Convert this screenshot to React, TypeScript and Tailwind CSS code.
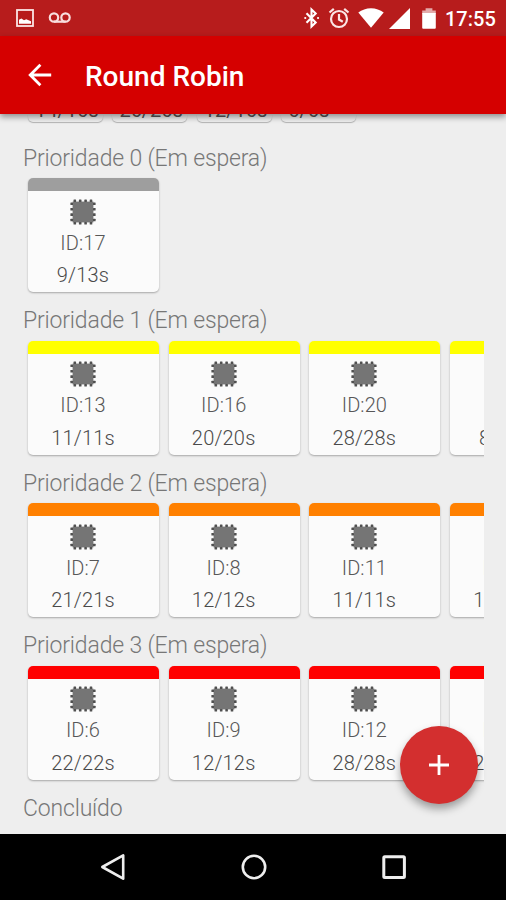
import type { ReactNode } from 'react'

type Process = { id: number; time: string }
type Queue = { title: string; bar: string; items: Process[] }

const RUNNING = ['14/16s', '26/26s', '12/16s', '6/6s']

const QUEUES: Queue[] = [
  { title: 'Prioridade 0 (Em espera)', bar: 'bg-[#9e9e9e]', items: [{ id: 17, time: '9/13s' }] },
  {
    title: 'Prioridade 1 (Em espera)', bar: 'bg-[#ffff00]',
    items: [{ id: 13, time: '11/11s' }, { id: 16, time: '20/20s' }, { id: 20, time: '28/28s' }, { id: 4, time: '8/18s' }],
  },
  {
    title: 'Prioridade 2 (Em espera)', bar: 'bg-[#ff8000]',
    items: [{ id: 7, time: '21/21s' }, { id: 8, time: '12/12s' }, { id: 11, time: '11/11s' }, { id: 14, time: '13/13s' }],
  },
  {
    title: 'Prioridade 3 (Em espera)', bar: 'bg-[#ff0000]',
    items: [{ id: 6, time: '22/22s' }, { id: 9, time: '12/12s' }, { id: 12, time: '28/28s' }, { id: 15, time: '22/22s' }],
  },
]

function ChipIcon() {
  const pins = [4.7, 10.1, 15.5, 20.9]
  return (
    <svg width="26" height="26" viewBox="0 0 26 26" className="shrink-0">
      <rect x="2.6" y="2.6" width="20.8" height="20.8" fill="#757575" />
      {pins.map(p => (
        <g key={p} fill="#505050">
          <rect x={p - 1.2} y="0.4" width="2.6" height="2.6" rx="0.5" />
          <rect x={p - 1.2} y="23" width="2.6" height="2.6" rx="0.5" />
          <rect x="0.4" y={p - 1.2} width="2.6" height="2.6" rx="0.5" />
          <rect x="23" y={p - 1.2} width="2.6" height="2.6" rx="0.5" />
        </g>
      ))}
    </svg>
  )
}

function ProcessCard({ process, bar }: { process: Process; bar: string }) {
  return (
    <div className="w-[131px] h-[114px] shrink-0 rounded-[5px] overflow-hidden bg-[#fbfbfb] shadow-[0_1px_2px_rgba(0,0,0,0.3)]">
      <div className={`h-[13px] ${bar}`} />
      <div className="flex w-[110px] flex-col items-center pt-[7.5px] text-[20px] leading-[32.5px] font-light text-[#4a4a4a]">
        <ChipIcon />
        <span className="mt-[2px] h-[32.5px] tracking-[0.1px] text-[#575757]">ID:{process.id}</span>
        <span className="h-[32.5px] tracking-[0.2px]">{process.time}</span>
      </div>
    </div>
  )
}

function QueueSection({ queue }: { queue: Queue }) {
  return (
    <section className="h-[162.6px] shrink-0">
      <QueueTitle>{queue.title}</QueueTitle>
      <div className="mt-[4px] flex h-[120px] gap-[9.7px] overflow-hidden pl-[5px] pt-[1px]">
        {queue.items.map(p => <ProcessCard key={p.id} process={p} bar={queue.bar} />)}
      </div>
    </section>
  )
}

function QueueTitle({ children }: { children: ReactNode }) {
  return <h2 className="h-[30px] pt-[0.5px] text-[23px] leading-[30px] font-light tracking-[-0.17px] whitespace-nowrap text-[#777]">{children}</h2>
}

function StatusBar() {
  return (
    <div className="flex h-9 shrink-0 items-center bg-[#b71c1c] pl-4 pr-[10px] text-white">
      <svg width="18" height="18" viewBox="0 0 18 18">
        <rect x="1" y="1" width="16" height="16" fill="none" stroke="#fbe6e6" strokeWidth="1.8" />
        <path d="M3 14.8v-4l2.4-1.3 2.6 1.8 2.2-1 4.8 1.9v2.6z" fill="#fff" />
      </svg>
      <svg className="ml-[14px]" width="24" height="14" viewBox="0 0 24 14" fill="none" stroke="#f8dede" strokeWidth="2.2">
        <circle cx="6" cy="6.5" r="4.2" />
        <circle cx="17.5" cy="6.5" r="4.2" />
        <path d="M6 10.7h11.5" />
      </svg>
      <svg className="ml-auto" width="16" height="22" viewBox="0 0 16 22" fill="none" stroke="#fff" strokeWidth="2.1">
        <path d="M2.5 6.2l9.2 9.3-4.2 4V2.5l4.2 4-9.2 9.3" />
        <path d="M1.2 11h.1M14 11h.1" strokeLinecap="round" />
      </svg>
      <svg className="ml-[8px]" width="22" height="22" viewBox="0 0 22 22" fill="none" stroke="#fbe6e6" strokeWidth="2.2">
        <circle cx="11" cy="12" r="8" />
        <path d="M11 7v5.5l3.8 2.2M1.5 5.5l4.3-3.6M20.5 5.5l-4.3-3.6" />
      </svg>
      <svg className="ml-[8px]" width="26" height="20" viewBox="0 0 26 20">
        <path d="M.3 4.5C3.8 1.8 8.2.2 13 .2s9.2 1.6 12.7 4.3L13 19.8z" fill="#fff" />
      </svg>
      <svg className="ml-[5px]" width="21" height="21" viewBox="0 0 21 21">
        <path d="M0 21L21 0v21z" fill="#fff" />
      </svg>
      <svg className="ml-[11px]" width="16" height="21" viewBox="0 0 16 21">
        <path d="M1.2 2.4h3.4V.3h6.8v2.1h3.4v3.4H1.2z" fill="#e3aaaa" />
        <path d="M1.2 5h13.6v14.8q0 1-1 1H2.2q-1 0-1-1z" fill="#fff" />
      </svg>
      <span className="ml-[8px] w-[51px] pt-[2px] text-[20px] leading-[34px] font-medium whitespace-nowrap">17:55</span>
    </div>
  )
}

function Toolbar() {
  return (
    <header className="relative z-10 flex h-[77.5px] shrink-0 items-center bg-[#d50000] pl-[27px] text-white shadow-[0_3px_6px_rgba(0,0,0,0.4)]">
      <svg width="24" height="24" viewBox="0 0 24 24" className="ml-px" fill="none" stroke="#fff" strokeWidth="2.8">
        <path d="M12.4 1.8L2.2 12l10.2 10.2M2.2 12h21" />
      </svg>
      <h1 className="ml-[33px] pt-[4px] text-[28px] leading-8 font-medium whitespace-nowrap">Round Robin</h1>
    </header>
  )
}

function NavBar() {
  return (
    <nav className="flex h-[66.5px] shrink-0 items-center bg-black pl-[99px]">
      <svg width="28" height="28" viewBox="0 0 28 28" fill="none" stroke="#eee" strokeWidth="2.6" strokeLinejoin="round">
        <path d="M3.3 14L24.2 2.3v23.4z" />
      </svg>
      <svg className="ml-[113px]" width="28" height="28" viewBox="0 0 28 28" fill="none" stroke="#eee" strokeWidth="2.6">
        <circle cx="14" cy="14" r="11.2" />
      </svg>
      <svg className="ml-[112px]" width="28" height="28" viewBox="0 0 28 28" fill="none" stroke="#eee" strokeWidth="3">
        <rect x="3.8" y="3.8" width="20.6" height="20.6" rx="1" />
      </svg>
    </nav>
  )
}

export default function App() {
  return (
    <div className="relative flex h-[900px] w-[506px] flex-col overflow-hidden bg-[#eeeeee] font-[Roboto,sans-serif]">
      <StatusBar />
      <Toolbar />
      <main className="flex h-[720px] flex-col overflow-hidden pl-[23px] pr-[22px]">
        <div className="flex h-[29.5px] shrink-0 gap-[9.4px] pl-[5px]">
          {RUNNING.map((time, i) => (
            <div key={i} className="flex h-[8.5px] w-[75px] items-end rounded-b-[5px] bg-[#eeeeee] pl-[7px] shadow-[0_1px_1px_rgba(0,0,0,0.25)]">
              <span className="mb-[-2px] h-[28px] text-[20px] leading-[28px] text-[#555]">{time}</span>
            </div>
          ))}
        </div>
        {QUEUES.map(q => <QueueSection key={q.title} queue={q} />)}
        <QueueTitle>Concluído</QueueTitle>
      </main>
      <NavBar />
      <button className="absolute top-[726px] left-[400px] flex size-[78px] items-center justify-center rounded-full bg-[#d32f2f] shadow-[0_5px_8px_rgba(0,0,0,0.35)]">
        <svg width="22" height="22" viewBox="0 0 22 22" stroke="#fff" strokeWidth="2.8">
          <path d="M11 1v20M1 11h20" />
        </svg>
      </button>
    </div>
  )
}
